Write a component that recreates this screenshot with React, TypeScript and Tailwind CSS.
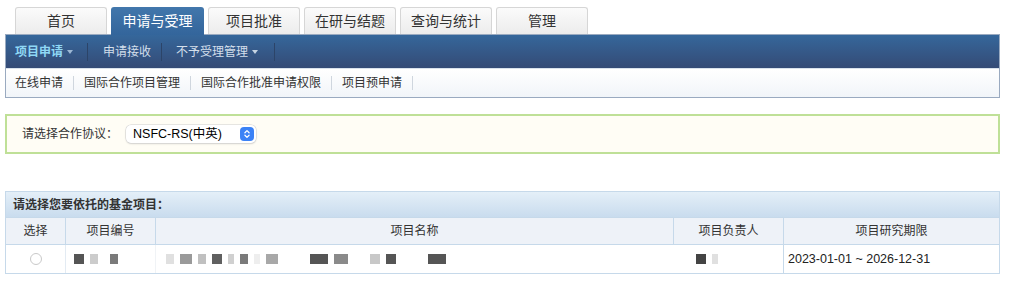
import { ChevronsUpDown } from 'lucide-react'

const font = { fontFamily: '"Liberation Sans", "Noto Sans CJK SC", sans-serif' }

const tabs = ['首页', '申请与受理', '项目批准', '在研与结题', '查询与统计', '管理']

const Caret = ({ color }: { color: string }) => (
  <span
    className="ml-[4px] w-0 h-0 border-l-[3px] border-r-[3px] border-t-[4px] border-l-transparent border-r-transparent"
    style={{ borderTopColor: color }}
  />
)

const Blocks = ({ items }: { items: [number, string][] }) => (
  <div className="flex items-center gap-[6px] blur-[0.6px]">
    {items.map(([w, c], i) => (
      <span key={i} className="h-[10px]" style={{ width: w, background: c }} />
    ))}
  </div>
)

const App = () => {
  return (
    <div className="w-[1024px] h-[291px] bg-white text-[#333] text-[12px]" style={font}>
      <div className="flex gap-[4px] pl-[15px] pt-[7px] h-[34px]">
        {tabs.map((t, i) =>
          i === 1 ? (
            <div key={t} className="w-[93px] h-[28px] rounded-t-[3px] bg-gradient-to-b from-[#4277ac] to-[#33659b] text-white text-[14px] flex items-center justify-center relative z-10">
              {t}
            </div>
          ) : (
            <div key={t} className="w-[92px] h-[27px] rounded-t-[3px] border border-b-0 border-[#d6d6d6] bg-gradient-to-b from-[#fbfbfb] to-[#ececec] text-[14px] flex items-center justify-center">
              {t}
            </div>
          )
        )}
      </div>

      <div className="mx-[5px] w-[995px] border border-[#9aaac0]">
        <div className="h-[33px] bg-gradient-to-b from-[#35679b] to-[#344b76] flex items-center text-[#d3dfeb]">
          <div className="flex items-center pl-[9px] w-[82px] h-[18px] border-r border-[#2c4468] text-[#8fd8f5] font-bold">
            项目申请<Caret color="#9db8d4" />
          </div>
          <div className="pl-[15px] w-[74px] h-[18px] flex items-center border-r border-[#2c4468]">申请接收</div>
          <div className="flex items-center pl-[14px] w-[113px] h-[18px] border-r border-[#2c4468]">
            不予受理管理<Caret color="#c6d4e3" />
          </div>
        </div>
        <div className="h-[29px] bg-gradient-to-b from-white to-[#f1f5f9] border-t border-[#d9e2ec] flex items-center pl-[9px]">
          {['在线申请', '国际合作项目管理', '国际合作批准申请权限', '项目预申请'].map((s) => (
            <div key={s} className="px-[10px] first:pl-0 h-[14px] flex items-center border-r border-[#cfd6de]">
              {s}
            </div>
          ))}
        </div>
      </div>

      <div className="mx-[5px] mt-[16px] w-[995px] h-[40px] border-2 border-[#bfe097] bg-[#fffdf5] flex items-center pl-[15px]">
        <span>请选择合作协议：</span>
        <div className="ml-[8px] w-[130px] h-[18px] rounded-[5px] bg-white shadow-[0_0_0_0.5px_#d0d0d0,0_1px_2px_rgba(0,0,0,0.15)] flex items-center justify-between pl-[7px] pr-[2px] text-[12.5px] text-black">
          NSFC-RS(中英)
          <span className="w-[14px] h-[14px] rounded-[4px] bg-[#3b82f6] flex items-center justify-center">
            <ChevronsUpDown size={10} className="text-white" strokeWidth={3} />
          </span>
        </div>
      </div>

      <div className="mx-[5px] mt-[37px] w-[995px] border border-[#c6d9ea]">
        <div className="h-[25px] bg-gradient-to-b from-[#e4eff8] to-[#c9dcee] flex items-center pl-[7px] font-bold">
          请选择您要依托的基金项目：
        </div>
        <div className="grid grid-cols-[60px_90px_518px_110px_1fr]">
          {['选择', '项目编号', '项目名称', '项目负责人', '项目研究期限'].map((h, i) => (
            <div key={h} className={`h-[28px] bg-[#eef2f8] border-t border-b border-[#c6d9ea] flex items-center justify-center ${i < 4 ? 'border-r' : ''}`}>
              {h}
            </div>
          ))}
          <div className="h-[28px] flex items-center justify-center border-r border-[#e3ebf3]">
            <span className="w-[12px] h-[12px] rounded-full border border-[#c9c9c9] bg-white" />
          </div>
          <div className="h-[28px] flex items-center pl-[8px] border-r border-[#f0f3f6]">
            <Blocks items={[[10, '#555'], [8, '#ccc'], [0, '#fff'], [8, '#7a7a7a']]} />
          </div>
          <div className="h-[28px] flex items-center pl-[10px]">
            <Blocks items={[[8, '#e0e0e0'], [12, '#9a9a9a'], [8, '#c0c0c0'], [10, '#606060'], [6, '#d0d0d0'], [8, '#7a7a7a'], [6, '#eee'], [12, '#a8a8a8'], [20, '#fff'], [18, '#555'], [14, '#8a8a8a'], [10, '#fff'], [10, '#c8c8c8'], [10, '#555'], [20, '#fff'], [18, '#555']]} />
          </div>
          <div className="h-[28px] flex items-center pl-[22px] border-r border-[#c6d9ea]">
            <Blocks items={[[10, '#444'], [6, '#e0e0e0']]} />
          </div>
          <div className="h-[28px] flex items-center pl-[4px] text-[12.5px] text-[#222]">2023-01-01 ~ 2026-12-31</div>
        </div>
      </div>
    </div>
  )
}

export default App
